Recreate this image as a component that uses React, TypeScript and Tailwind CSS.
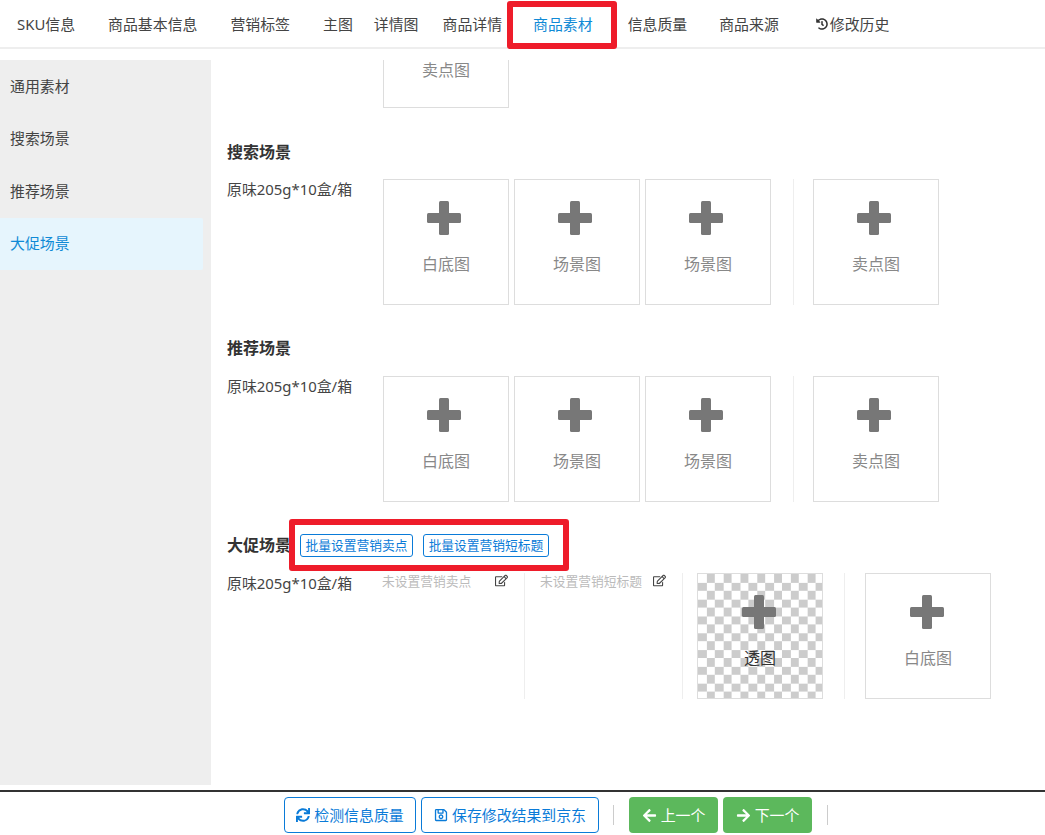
import React from "react";
import { FaHistory, FaSync, FaRegSave, FaArrowLeft, FaArrowRight, FaRegEdit } from "react-icons/fa";

const font = { fontFamily: '"Noto Sans", "Noto Sans CJK SC", sans-serif' };

function Plus({ shift }: { shift?: boolean }) {
  return (
    <svg width="34" height="34" viewBox="0 0 34 34" className={shift ? "ml-[-2px] shrink-0" : "ml-[-4px] shrink-0"}>
      <rect x="12" y="0" width="10" height="34" rx="1.5" fill="#777" />
      <rect x="0" y="12" width="34" height="10" rx="1.5" fill="#777" />
    </svg>
  );
}

function Box({ label, shift }: { label: string; shift?: boolean }) {
  return (
    <div className="w-[126px] h-[126px] shrink-0 border border-[#ddd] flex flex-col items-center pt-[21px]">
      <Plus shift={shift} />
      <div className="mt-[19px] text-[16px] leading-[20px] text-[#888]">{label}</div>
    </div>
  );
}

function VDivider({ className }: { className: string }) {
  return <div className={"w-px h-[126px] bg-[#eee] shrink-0 " + className} />;
}

function Row() {
  return (
    <div className="flex">
      <div className="w-[156px] shrink-0 leading-[20px] text-[#444]">原味205g*10盒/箱</div>
      <div className="flex gap-[5px]">
        <Box label="白底图" />
        <Box label="场景图" />
        <Box label="场景图" />
      </div>
      <VDivider className="ml-[22px] mr-[19px]" />
      <Box label="卖点图" />
    </div>
  );
}

function NoteCol({ text }: { text: string }) {
  return (
    <div className="w-[126px] shrink-0 h-[126px] flex justify-between items-start text-[12.75px] leading-[16px] text-[#bbb]">
      <span>{text}</span>
      <FaRegEdit className="text-[#444] text-[13px] mt-[1px]" />
    </div>
  );
}

const navs: [string, string][] = [
  ["SKU信息", "ml-0 text-[#444]"],
  ["商品基本信息", "ml-[33px] text-[#444]"],
  ["营销标签", "ml-[33px] text-[#444]"],
  ["主图", "ml-[33px] text-[#444]"],
  ["详情图", "ml-[21px] text-[#444]"],
  ["商品详情", "ml-[24px] text-[#444]"],
  ["商品素材", "ml-[31px] text-[#0f8ad6]"],
  ["信息质量", "ml-[35px] text-[#444]"],
  ["商品来源", "ml-[32px] text-[#444]"],
];

export default function App() {
  return (
    <div className="relative w-[1045px] h-[835px] overflow-hidden bg-white text-[14.9px] text-[#444] flex flex-col" style={font}>
      <header className="h-[49px] shrink-0 border-b-2 border-[#eee] flex items-center pl-[17px]">
        {navs.map(([t, c]) => (
          <span key={t} className={c + " leading-[20px] whitespace-nowrap"}>{t}</span>
        ))}
        <span className="ml-[37px] flex items-center leading-[20px] whitespace-nowrap text-[#444]">
          <FaHistory className="text-[12px] mr-[2px] text-[#333]" />修改历史
        </span>
      </header>

      <div className="mt-[11px] h-[725px] shrink-0 flex">
        <aside className="w-[211px] shrink-0 bg-[#eee]">
          {["通用素材", "搜索场景", "推荐场景"].map((t) => (
            <div key={t} className="h-[52.4px] pl-[10px] flex items-center">{t}</div>
          ))}
          <div className="mt-px h-[52px] w-[203px] pl-[10px] pb-[2px] flex items-center bg-[#e6f5fd] text-[#0f8ad6] rounded-r-[2px]">大促场景</div>
        </aside>

        <main className="flex-1 pl-[16px] overflow-hidden">
          <div className="ml-[156px] w-[126px] h-[48px] border border-t-0 border-[#ddd] text-center text-[16px] text-[#888] leading-[20px]">卖点图</div>

          <h3 className="mt-[32px] h-[24px] mb-[15px] text-[16px] font-bold leading-[24px] text-[#333]">搜索场景</h3>
          <Row />

          <h3 className="mt-[31px] h-[24px] mb-[16px] text-[16px] font-bold leading-[24px] text-[#333]">推荐场景</h3>
          <Row />

          <div className="mt-[31px] h-[24px] mb-[16px] flex items-center">
            <h3 className="w-[64px] shrink-0 text-[16px] font-bold leading-[24px] text-[#333]">大促场景</h3>
            <button className="ml-[9px] mt-[1px] h-[23px] w-[113px] border border-[#0a7bd8] rounded-[3px] text-[12.75px] text-[#0a7bd8] whitespace-nowrap">批量设置营销卖点</button>
            <button className="ml-[10px] mt-[1px] h-[23px] w-[126px] border border-[#0a7bd8] rounded-[3px] text-[12.75px] text-[#0a7bd8] whitespace-nowrap">批量设置营销短标题</button>
          </div>
          <div className="flex">
            <div className="w-[155px] shrink-0 leading-[20px] text-[#444]">原味205g*10盒/箱</div>
            <NoteCol text="未设置营销卖点" />
            <VDivider className="ml-[16px] mr-[15px]" />
            <NoteCol text="未设置营销短标题" />
            <VDivider className="ml-[16px] mr-[14px]" />
            <div className="w-[126px] h-[126px] shrink-0 border border-[#ddd] flex flex-col items-center pt-[21px] bg-[conic-gradient(#ccc_25%,#fff_0_50%,#ccc_0_75%,#fff_0)] bg-[length:16.8px_16.8px]">
              <Plus shift />
              <div className="mt-[19px] text-[16px] leading-[20px] text-[#333]">透图</div>
            </div>
            <VDivider className="ml-[21px] mr-[20px]" />
            <Box label="白底图" shift />
          </div>
        </main>
      </div>

      <footer className="mt-[5px] border-t-2 border-[#333] flex-1 flex items-start pt-[5px] pl-[284px]">
        <button className="h-[36px] w-[132px] border border-[#0a7bd8] rounded-[4px] bg-white text-[#0a7bd8] flex items-center justify-center gap-[4px] whitespace-nowrap">
          <FaSync className="text-[14px]" />检测信息质量
        </button>
        <button className="ml-[5px] h-[36px] w-[178px] border border-[#0a7bd8] rounded-[4px] bg-white text-[#0a7bd8] flex items-center justify-center gap-[4px] whitespace-nowrap">
          <FaRegSave className="text-[14px]" />保存修改结果到京东
        </button>
        <div className="ml-[14px] mt-[8px] w-px h-[20px] bg-[#ccc]" />
        <button className="ml-[15px] h-[36px] w-[89px] rounded-[4px] bg-[#5cb85c] text-white flex items-center justify-center gap-[4px] whitespace-nowrap">
          <FaArrowLeft className="text-[15px]" />上一个
        </button>
        <button className="ml-[5px] h-[36px] w-[89px] rounded-[4px] bg-[#5cb85c] text-white flex items-center justify-center gap-[4px] whitespace-nowrap">
          <FaArrowRight className="text-[15px]" />下一个
        </button>
        <div className="ml-[15px] mt-[8px] w-px h-[20px] bg-[#ccc]" />
      </footer>

      <div className="absolute left-[507px] top-px w-[110px] h-[48px] border-[6px] border-[#ee1c2a] rounded-[3px]" />
      <div className="absolute left-[289px] top-[519px] w-[280px] h-[52px] border-[6px] border-[#ee1c2a] rounded-[3px]" />
    </div>
  );
}
